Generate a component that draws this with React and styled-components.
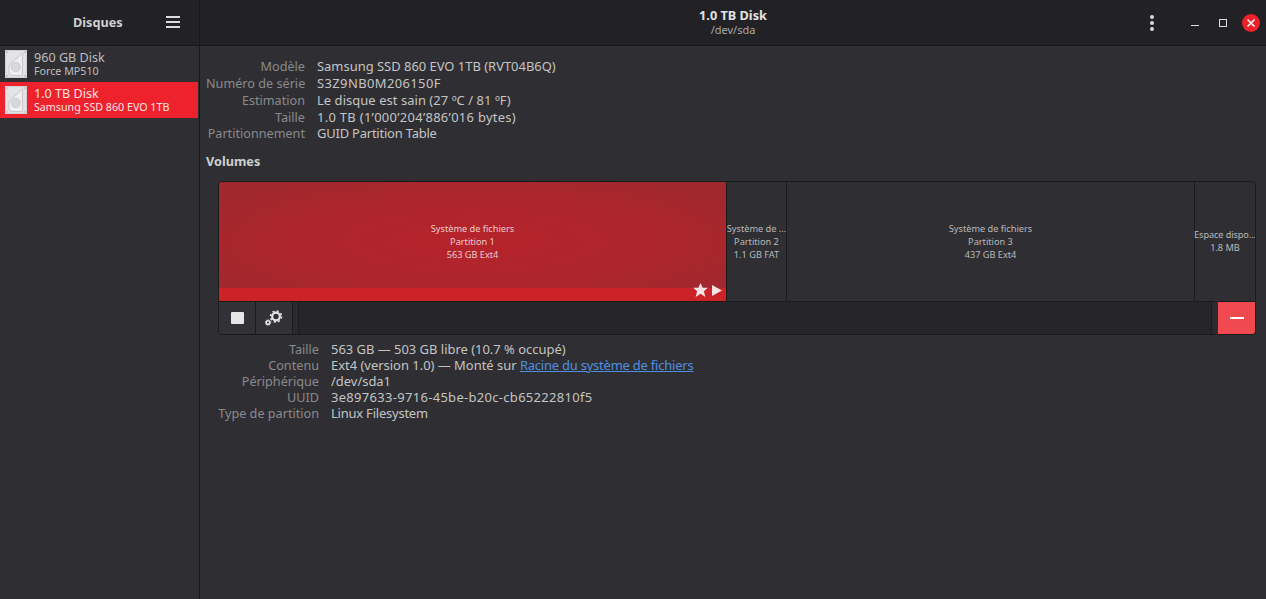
import React from "react";
import styled, { createGlobalStyle } from "styled-components";

const Global = createGlobalStyle`
  html, body { margin: 0; padding: 0; background: #2f2f33; }
  body { font-family: "Noto Sans", "Open Sans", sans-serif; }
`;

const Window = styled.div`
  width: 1266px; height: 599px; overflow: hidden; display: grid;
  grid-template-columns: 199px 1fr; grid-template-rows: 46px 1fr;
  background: #2f2f33; color: #e0e0e0;
`;
const SideHeader = styled.header`
  background: #222226; border-bottom: 1px solid #18181a; border-right: 1px solid #18181a;
  box-sizing: border-box; width: 200px; display: flex; align-items: center;
  padding: 0 19px 1px 73px; justify-content: space-between;
`;
const SideTitle = styled.div`font-size: 12.7px; font-weight: 700; color: #cfcfcf; padding-bottom: 1px;`;
const MainHeader = styled.header`
  background: #222226; border-bottom: 1px solid #18181a; display: grid;
  grid-template-columns: 1fr auto 1fr; align-items: center; margin-left: 1px;
`;
const TitleBlock = styled.div`text-align: center;`;
const Title = styled.div`font-size: 12.7px; line-height: 15px; font-weight: 700; color: #e2e2e2;`;
const Subtitle = styled.div`font-size: 11px; line-height: 14px; color: #a8a8a8;`;
const Controls = styled.div`display: flex; align-items: center; justify-content: flex-end; padding-right: 6px;`;
const Ctl = styled.button`
  border: 0; background: none; padding: 0; color: #dcdcdc; display: flex; align-items: center;
  justify-content: center; width: ${p => p.$w}px; height: 18px; margin-left: ${p => p.$ml || 0}px;
`;
const Sidebar = styled.aside`
  background: #2f2f33; border-right: 1px solid #18181a; box-sizing: content-box; width: 199px;
`;
const Drive = styled.div`
  height: 36px; width: 198px; display: flex; align-items: center; gap: 7px; padding-left: 5px; box-sizing: border-box;
  background: ${p => (p.$active ? "#ee222c" : "transparent")};
  color: ${p => (p.$active ? "#fbe3e3" : "#bdbdbd")};
`;
const DriveText = styled.div`padding-bottom: 2px;`;
const DriveName = styled.div`font-size: 12.6px; line-height: 17px; white-space: nowrap;`;
const DriveSub = styled.div`font-size: 10.7px; line-height: 11px; white-space: nowrap;`;
const Main = styled.main`padding: 11px 10px 0 6px; margin-left: 1px;`;
const Info = styled.div`
  display: grid; grid-template-columns: ${p => p.$label}px 1fr; column-gap: 12px; margin-left: ${p => p.$ml || 0}px;
  margin-top: ${p => p.$mt || 0}px; grid-template-rows: ${p => p.$rows}; align-items: center;
`;
const Key = styled.div`text-align: right; color: #8a8a8c; white-space: nowrap; font-size: 12.65px;`;
const Val = styled.div`color: #c4c4c4; white-space: nowrap; font-size: 12.95px; letter-spacing: ${p => p.$ls || 0}px;`;
const Link = styled.a`color: #4f8fe0; text-decoration: underline; letter-spacing: -0.2px;`;
const Heading = styled.h2`margin: 12px 0 11px; font-size: 12.7px; line-height: 17px; font-weight: 700; color: #cfcfcf;`;
const Volumes = styled.section`
  margin-left: 12px; width: 1038px; height: 154px; border: 1px solid #1b1b1e; border-radius: 4px; box-sizing: border-box;
  overflow: hidden; display: flex; flex-direction: column;
`;
const Bar = styled.div`display: flex; height: 119px; border-bottom: 1px solid #1b1b1e; flex: none;`;
const Part = styled.div`
  width: ${p => p.$w}px; flex: none; box-sizing: border-box; position: relative;
  display: flex; flex-direction: column; align-items: center; justify-content: center;
  font-size: 9.2px; line-height: 13px; color: #b9b9b9; padding-bottom: 1px;
  border-right: ${p => (p.$last ? "0" : "1px solid #1b1b1e")};
  background: ${p => (p.$active ? "radial-gradient(ellipse 60% 60% at 50% 50%, #b6232b 0%, #ae252c 60%, #a1282d 100%)" : "#2f2f33")};
  ${p => p.$active && "color: #ecccce;"}
`;
const Used = styled.div`position: absolute; left: 0; right: 0; bottom: 0; height: 13px; background: #cc2329;`;
const PartIcons = styled.div`position: absolute; right: 4px; bottom: 4px; display: flex; align-items: center; gap: 4px;`;
const Clip = styled.div`white-space: nowrap; letter-spacing: ${p => (p.$tight ? "-0.1px" : "0")};`;
const Toolbar = styled.div`display: flex; flex: 1; background: #2b2b2f;`;
const ToolBtn = styled.button`
  width: 37px; border: 0; border-right: 1px solid #1b1b1e; padding: 0; background: #323236; color: #e4e4e4;
  display: flex; align-items: center; justify-content: center; box-sizing: border-box;
`;
const Spacer = styled.div`flex: 1; margin: 0 6px 0 5px; background: #26262a; border-left: 1px solid #1b1b1e; border-right: 1px solid #1b1b1e;`;
const Remove = styled.button`
  width: 37px; border: 0; padding: 0; background: #f04a50; display: flex; align-items: center; justify-content: center;
`;

const DiskIcon = () => (
  <svg width="22" height="28" viewBox="0 0 22 28" style={{ flex: "none" }}>
    <rect x="0" y="0" width="22" height="28" fill="#e3e3e5" />
    <rect x="0.500" y="0.500" width="21" height="27" fill="none" stroke="#d2d2d5" />
    <path d="M17.500 3 L4 15.500 v7 q0 3 3 3 h10.500 Z" fill="#efeff0" stroke="#c8c8cb" />
    <circle cx="10.800" cy="17" r="4.500" fill="#d9d9db" stroke="#cbcbcd" />
    <g fill="#8a8a8d">
      <rect x="1.500" y="1.500" width="1" height="1" /><rect x="19.500" y="1.500" width="1" height="1" />
      <rect x="1.500" y="25.500" width="1" height="1" /><rect x="19.500" y="25.500" width="1" height="1" />
    </g>
  </svg>
);
const Menu = () => (
  <svg width="14" height="12" viewBox="0 0 14 12"><path d="M0 1h14M0 6h14M0 11h14" stroke="#dcdcdc" strokeWidth="2" /></svg>
);
const Kebab = () => (
  <svg width="4" height="16" viewBox="0 0 4 16" fill="#d8d8d8"><circle cx="2" cy="2" r="2" /><circle cx="2" cy="8" r="2" /><circle cx="2" cy="14" r="2" /></svg>
);
const Gears = () => (
  <svg width="18" height="16" viewBox="0 0 18 16" fill="none" stroke="#e4e4e4">
    <circle cx="11" cy="6.500" r="3.800" strokeWidth="2.200" />
    <circle cx="11" cy="6.500" r="5.500" strokeWidth="1.600" strokeDasharray="2.100 2.220" />
    <circle cx="3" cy="12.500" r="1.800" strokeWidth="1.600" />
    <circle cx="3" cy="12.500" r="2.800" strokeWidth="0.800" strokeDasharray="1.200 1.000" />
  </svg>
);

const rows1 = [
  ["Modèle", "Samsung SSD 860 EVO 1TB (RVT04B6Q)", 0],
  ["Numéro de série", "S3Z9NB0M206150F", 0.4],
  ["Estimation", "Le disque est sain (27 ºC / 81 ºF)", 0.06],
  ["Taille", "1.0 TB (1’000’204’886’016 bytes)", 0.3],
  ["Partitionnement", "GUID Partition Table", -0.2],
];

export default function App() {
  return (
    <Window>
      <Global />
      <SideHeader><SideTitle>Disques</SideTitle><Menu /></SideHeader>
      <MainHeader>
        <div />
        <TitleBlock><Title>1.0 TB Disk</Title><Subtitle>/dev/sda</Subtitle></TitleBlock>
        <Controls>
          <Ctl $w={4}><Kebab /></Ctl>
          <Ctl $w={10} $ml={36}><svg width="8" height="8"><rect width="8" height="1" y="6" fill="#ddd" /></svg></Ctl>
          <Ctl $w={10} $ml={18}><svg width="8" height="8"><rect x=".5" y=".5" width="7" height="7" fill="none" stroke="#ddd" /></svg></Ctl>
          <Ctl $w={18} $ml={14}>
            <svg width="18" height="18"><circle cx="9" cy="9" r="9" fill="#ec2129" /><path d="M5.500 5.500l7 7M12.500 5.500l-7 7" stroke="#fff" strokeWidth="1.600" /></svg>
          </Ctl>
        </Controls>
      </MainHeader>
      <Sidebar>
        <Drive><DiskIcon /><DriveText><DriveName>960 GB Disk</DriveName><DriveSub>Force MP510</DriveSub></DriveText></Drive>
        <Drive $active><DiskIcon /><DriveText><DriveName>1.0 TB Disk</DriveName><DriveSub>Samsung SSD 860 EVO 1TB</DriveSub></DriveText></Drive>
      </Sidebar>
      <Main>
        <Info $label={99} $rows="17px 17px 17px 17px 16px">
          {rows1.map(([k, v, ls]) => <React.Fragment key={k}><Key>{k}</Key><Val $ls={ls}>{v}</Val></React.Fragment>)}
        </Info>
        <Heading>Volumes</Heading>
        <Volumes>
          <Bar>
            <Part $w={508} $active>
              <Clip>Système de fichiers</Clip><Clip>Partition 1</Clip><Clip>563 GB Ext4</Clip>
              <Used />
              <PartIcons>
                <svg width="15" height="14" viewBox="0 0 24 23" fill="#f6e3e3"><path d="M12 0l3.500 8H24l-6.500 5.500L20 23l-8-5.500L4 23l2.500-9.500L0 8h8.500Z" /></svg>
                <svg width="10" height="11" viewBox="0 0 10 11" fill="#f6e3e3"><path d="M0 0l10 5.500L0 11Z" /></svg>
              </PartIcons>
            </Part>
            <Part $w={60}><Clip>Système de ...</Clip><Clip>Partition 2</Clip><Clip>1.1 GB FAT</Clip></Part>
            <Part $w={408}><Clip>Système de fichiers</Clip><Clip>Partition 3</Clip><Clip>437 GB Ext4</Clip></Part>
            <Part $w={60} $last><Clip $tight>Espace dispo...</Clip><Clip>1.8 MB</Clip></Part>
          </Bar>
          <Toolbar>
            <ToolBtn><svg width="13" height="12"><rect width="13" height="12" rx="1" fill="#e6e6e6" /></svg></ToolBtn>
            <ToolBtn><Gears /></ToolBtn>
            <Spacer />
            <Remove><svg width="14" height="2"><rect width="14" height="2" fill="#fff" /></svg></Remove>
          </Toolbar>
        </Volumes>
        <Info $label={101} $ml={12} $rows="16px 16px 16px 16px 16px" $mt={6}>
          <Key>Taille</Key><Val>563 GB — 503 GB libre (10.7 % occupé)</Val>
          <Key>Contenu</Key><Val>Ext4 (version 1.0) — Monté sur <Link>Racine du système de fichiers</Link></Val>
          <Key>Périphérique</Key><Val>/dev/sda1</Val>
          <Key>UUID</Key><Val $ls={0.33}>3e897633-9716-45be-b20c-cb65222810f5</Val>
          <Key>Type de partition</Key><Val $ls={-0.2}>Linux Filesystem</Val>
        </Info>
      </Main>
    </Window>
  );
}
